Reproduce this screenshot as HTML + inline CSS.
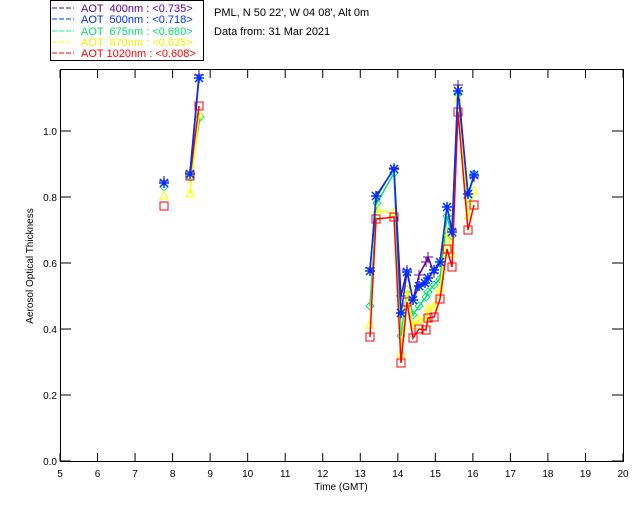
<!DOCTYPE html>
<html><head><style>
html,body{margin:0;padding:0;background:#fff;}
svg{display:block;font-family:"Liberation Sans",sans-serif;}
</style></head><body>
<svg id="s" width="640" height="512" viewBox="0 0 640 512" xmlns="http://www.w3.org/2000/svg">
<rect width="640" height="512" fill="#fff"/>
<rect x="50.5" y="0.5" width="153" height="60" fill="none" stroke="#000"/>
<g font-size="11">
<line x1="52" y1="8" x2="74" y2="8" stroke="#6000a0" stroke-dasharray="5,2"/>
<text x="81" y="12" fill="#6000a0" xml:space="preserve">AOT  400nm : &lt;0.735&gt;</text>
<line x1="52" y1="19" x2="74" y2="19" stroke="#0030ff" stroke-dasharray="5,2"/>
<text x="81" y="23" fill="#0030ff" xml:space="preserve">AOT  500nm : &lt;0.718&gt;</text>
<line x1="52" y1="31" x2="74" y2="31" stroke="#00ff80" stroke-dasharray="5,2"/>
<text x="81" y="35" fill="#00e070" xml:space="preserve">AOT  675nm : &lt;0.680&gt;</text>
<line x1="52" y1="42" x2="74" y2="42" stroke="#ffff00" stroke-dasharray="5,2"/>
<text x="81" y="46" fill="#f0f000" xml:space="preserve">AOT  870nm : &lt;0.635&gt;</text>
<line x1="52" y1="53" x2="74" y2="53" stroke="#ff0000" stroke-dasharray="5,2"/>
<text x="81" y="57" fill="#ff0000" xml:space="preserve">AOT 1020nm : &lt;0.608&gt;</text>
<text x="214" y="16" fill="#000">PML, N 50 22', W 04 08', Alt 0m</text>
<text x="214" y="35" fill="#000">Data from: 31 Mar 2021</text>
</g>
<rect x="60.5" y="69.5" width="563" height="392" fill="none" stroke="#000"/>
<g id="ticks" stroke="#000"></g>
<g font-size="10" fill="#000" text-anchor="end">
<text x="57" y="465">0.0</text><text x="57" y="399">0.2</text><text x="57" y="333">0.4</text>
<text x="57" y="267">0.6</text><text x="57" y="201">0.8</text><text x="57" y="135">1.0</text>
</g>
<g id="xl" font-size="10" fill="#000" text-anchor="middle"></g>
<text x="341" y="490" font-size="10" text-anchor="middle">Time (GMT)</text>
<text transform="translate(33,266) rotate(-90)" font-size="10" text-anchor="middle">Aerosol Optical Thickness</text>
<g id="data" fill="none" stroke-width="1"></g>
</svg>
<script>
const NS="http://www.w3.org/2000/svg";
function el(p,t,a){const e=document.createElementNS(NS,t);for(const k in a)e.setAttribute(k,a[k]);p.appendChild(e);return e;}
const tk=document.getElementById('ticks'),xl=document.getElementById('xl');
for(let h=5;h<=20;h++){const x=60+(h-5)*563/15;
 el(tk,'line',{x1:x,y1:461,x2:x,y2:453});el(tk,'line',{x1:x,y1:70,x2:x,y2:78});
 const t=el(xl,'text',{x:x,y:477});t.textContent=h;}
for(let i=0;i<6;i++){const y=461-i*66;el(tk,'line',{x1:60,y1:y,x2:71,y2:y});el(tk,'line',{x1:623,y1:y,x2:612,y2:y});}
const d=document.getElementById('data');
const S=[
 ['#6000a0','plus',[164,181],[[190,172],[199,75]],[[370,268],[377,196],[394,168],[401,296],[407,270],[413,300],[419,275],[426,262],[428,257],[434,273],[440,262],[447,207],[452,230],[458,85],[468,194],[474,177]]],
 ['#00e070','dia',[164,187],[[190,177],[200,117]],[[370,306],[377,203],[394,173],[401,336],[407,290],[413,315],[419,306],[426,297],[428,292],[434,285],[440,279],[447,216],[452,236],[458,94],[468,198],[474,174]]],
 ['#ffff00','tri',[164,196],[[190,194],[199,115]],[[370,325],[377,210],[394,213],[401,354],[407,290],[413,326],[419,320],[426,319],[428,308],[434,307],[440,289],[447,232],[452,254],[458,99],[468,216],[474,191]]],
 ['#ff0000','sq',[164,206],[[190,176],[199,106]],[[370,337],[376,219],[394,217],[401,363],[407,302],[413,338],[419,329],[426,330],[428,318],[434,317],[440,299],[447,249],[452,267],[458,112],[468,230],[474,205]]],
 ['#0030ff','star',[164,183],[[190,174],[199,78]],[[370,271],[376,196],[394,169],[401,313],[407,272],[413,300],[419,286],[425,283],[428,278],[434,270],[440,262],[447,207],[452,232],[458,91],[468,194],[474,175]]]
];
function mk(c,m,x,y){
 if(m=='plus'){el(d,'path',{d:`M${x-5} ${y}h10M${x} ${y-5}v10`,stroke:c});}
 else if(m=='star'){el(d,'path',{d:`M${x-5} ${y}h10M${x} ${y-5}v10M${x-4} ${y-4}l8 8M${x-4} ${y+4}l8 -8`,stroke:c,'stroke-width':1.5});}
 else if(m=='dia'){el(d,'path',{d:`M${x} ${y-4}l4 4l-4 4l-4 -4z`,stroke:c});}
 else if(m=='tri'){el(d,'path',{d:`M${x} ${y-5}l4 8h-8z`,stroke:c});}
 else {el(d,'rect',{x:x-4,y:y-4,width:8,height:8,stroke:c});}
}
S.forEach(([c,m,p0,a,b])=>{mk(c,m,p0[0],p0[1]);[a,b].forEach(g=>{el(d,'polyline',{points:g.map(p=>p.join(',')).join(' '),stroke:c,'stroke-width':1.5});g.forEach(p=>mk(c,m,p[0],p[1]));});});
</script>
</body></html>
